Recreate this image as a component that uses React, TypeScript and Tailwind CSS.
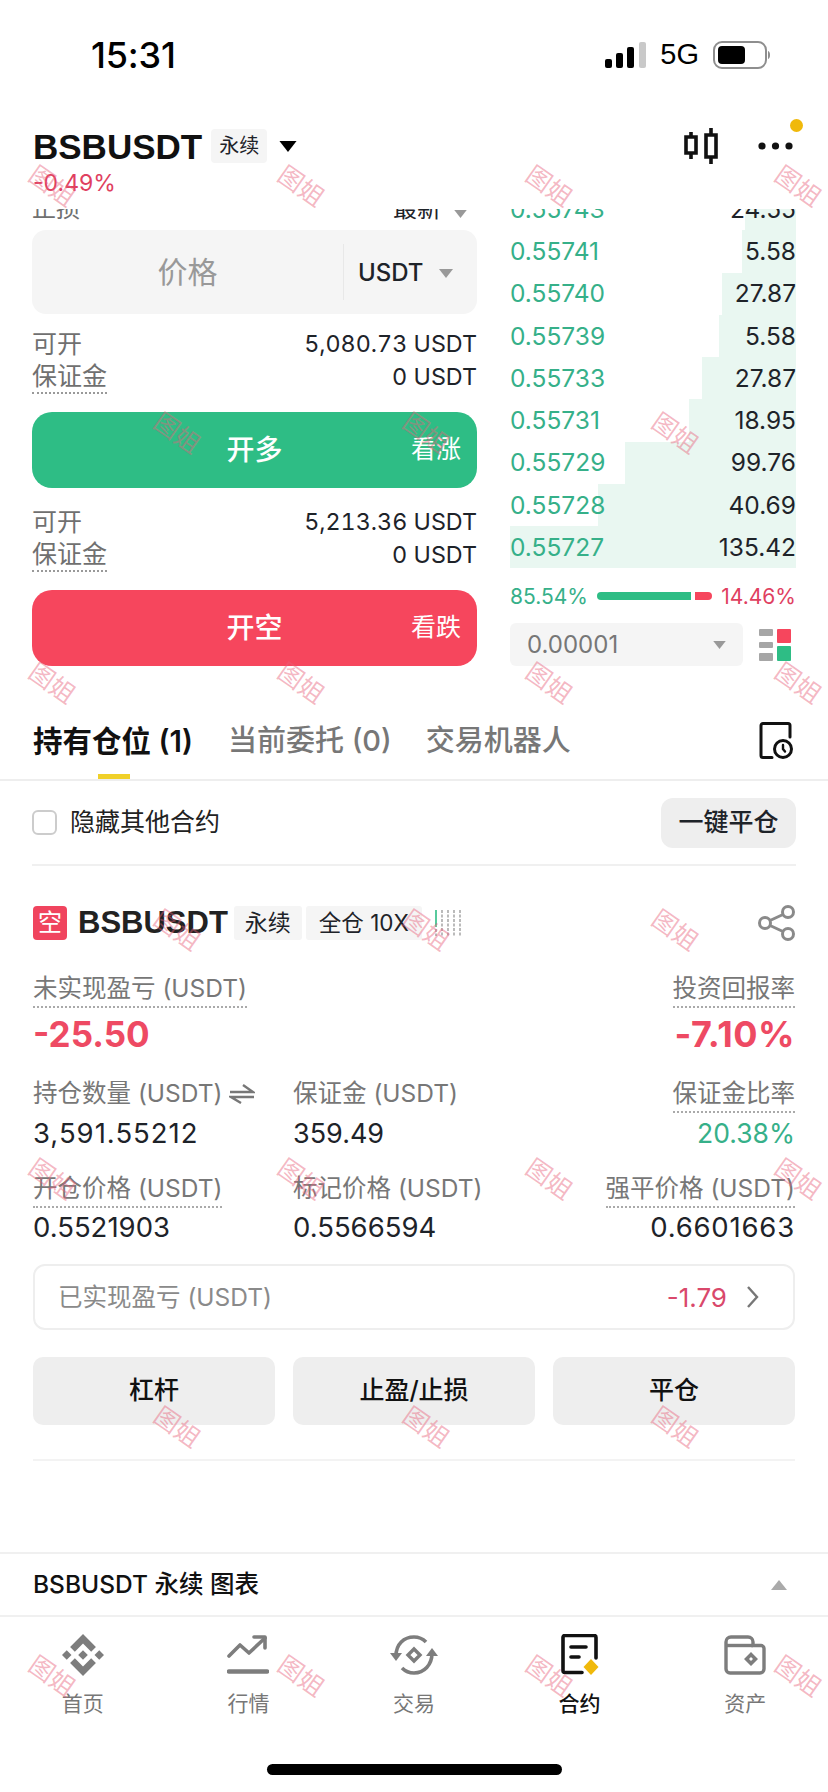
import React from "react";

const FONT = "font-['Inter','Noto_Sans_CJK_SC',sans-serif]";

const BOOK = [
  { price: "0.55743", qty: "24.55", left: 745 },
  { price: "0.55741", qty: "5.58", left: 742 },
  { price: "0.55740", qty: "27.87", left: 722 },
  { price: "0.55739", qty: "5.58", left: 719 },
  { price: "0.55733", qty: "27.87", left: 702 },
  { price: "0.55731", qty: "18.95", left: 689 },
  { price: "0.55729", qty: "99.76", left: 625 },
  { price: "0.55728", qty: "40.69", left: 598 },
  { price: "0.55727", qty: "135.42", left: 510 },
];

// watermark rows as they repeat across the page: [centre x, centre y]
const MARKS: [number, number][] = [
  [52, 186], [301, 186], [549, 186], [798, 186],
  [177, 433], [426, 433], [675, 433],
  [52, 683], [301, 683], [549, 683], [798, 683],
  [177, 930], [426, 930], [675, 930],
  [52, 1179], [301, 1179], [549, 1179], [798, 1179],
  [177, 1427], [426, 1427], [675, 1427],
  [52, 1676], [301, 1676], [549, 1676], [798, 1676],
];

function Caret({ className }: { className: string }) {
  return (
    <svg viewBox="0 0 14 9" className={className} fill="currentColor">
      <path d="M0 0h14L7 9z" />
    </svg>
  );
}

function OpenInfo({ amount, className }: { amount: string; className: string }) {
  return (
    <div className={className}>
      <div className="flex h-[33px] items-center justify-between text-[25px]">
        <span className="text-[#707070]">可开</span>
        <span className="text-[23.3px] text-[#1e2329] tabular-nums">{amount}</span>
      </div>
      <div className="flex h-[33px] items-center justify-between text-[25px]">
        <span className="h-[33px] border-b-2 border-dotted border-[#999] leading-[31px] text-[#707070]">保证金</span>
        <span className="text-[23.3px] text-[#1e2329]">0 USDT</span>
      </div>
    </div>
  );
}

function ActionButton({ label, hint, color }: { label: string; hint: string; color: string }) {
  return (
    <div className={`relative mt-[18px] flex h-[76px] items-center justify-center rounded-[20px] text-white ${color}`}>
      <span className="text-[28px] font-medium">{label}</span>
      <span className="absolute right-[16px] text-[25px]">{hint}</span>
    </div>
  );
}

function DottedLabel({ children }: { children: React.ReactNode }) {
  return (
    <span className="h-[35px] border-b-2 border-dotted border-[#aaa] text-[24.5px] leading-[30px] whitespace-nowrap text-[#777]">
      {children}
    </span>
  );
}

function PlainLabel({ children }: { children: React.ReactNode }) {
  return <span className="flex h-[35px] items-start text-[24.5px] leading-[30px] whitespace-nowrap text-[#777]">{children}</span>;
}

function Tag({ children, className }: { children: React.ReactNode; className: string }) {
  return <span className={`flex items-center justify-center bg-[#f5f5f5] text-[#1e2329] ${className}`}>{children}</span>;
}

function GrayButton({ children }: { children: React.ReactNode }) {
  return (
    <div className="flex h-[68px] w-[242px] items-center justify-center rounded-[10px] bg-[#eeeeee] text-[25px] font-medium text-[#111]">
      {children}
    </div>
  );
}

function HomeIcon() {
  return (
    <svg viewBox="0 0 126.61 126.61" className="h-[42px] w-[42px]" fill="#7d7d7d">
      <path d="m38.73 53.2 24.59-24.58 24.6 24.6 14.3-14.31L63.32 0 24.43 38.9zM0 63.31l14.3-14.31 14.31 14.31-14.31 14.3zM38.73 73.41l24.59 24.59 24.6-24.6 14.31 14.29-38.9 38.91-38.91-38.88-.02-.02zM98 63.31l14.3-14.31 14.31 14.3-14.31 14.32z" />
      <path d="M77.83 63.3 63.32 48.78 48.81 63.28l14.51 14.5z" />
    </svg>
  );
}

function MarketIcon() {
  return (
    <svg viewBox="0 0 42 42" className="h-[42px] w-[42px]" fill="none" stroke="#7d7d7d" strokeWidth="3.6" strokeLinecap="round" strokeLinejoin="round">
      <path d="M2 22l11-11 9 8L38 4" />
      <path d="M27 3h11v11" />
      <path d="M2 37.500h38" strokeWidth="4.6" />
    </svg>
  );
}

function TradeIcon() {
  return (
    <svg viewBox="0 0 50 42" className="h-[42px] w-[50px]" fill="none" stroke="#7d7d7d" strokeWidth="3.6">
      <path d="M7 22C7 10 15 3 25 3c5 0 9 2 12 5" />
      <path d="M43 19c0 12-8 20-18 20-5 0-9-2-12-5" />
      <path d="M1 19h12l-6 8zM37 22h12l-6-8z" fill="#7d7d7d" stroke="none" />
      <path d="M25 15l6 6-6 6-6-6z" strokeWidth="3.4" />
    </svg>
  );
}

function ContractIcon() {
  return (
    <svg viewBox="0 0 40 42" className="h-[42px] w-[40px]">
      <path d="M22 38.500H5a2 2 0 0 1-2-2v-33a2 2 0 0 1 2-2h29a2 2 0 0 1 2 2V24" fill="none" stroke="#111" strokeWidth="3.6" strokeLinecap="round" />
      <path d="M11 13h15M11 23h8" stroke="#111" strokeWidth="3.6" strokeLinecap="round" />
      <path d="M31 25l7.500 8-7.500 8-7.500-8z" fill="#f0b90b" />
    </svg>
  );
}

function AssetIcon() {
  return (
    <svg viewBox="0 0 42 42" className="h-[42px] w-[42px]" fill="none" stroke="#7d7d7d" strokeWidth="3.4">
      <path d="M2 8a5 5 0 0 1 5-5h17a5 5 0 0 1 5 5v3.500h8a3 3 0 0 1 3 3V35a4 4 0 0 1-4 4H6a4 4 0 0 1-4-4z" />
      <path d="M3 11.500h26" />
      <path fillRule="evenodd" d="M27 18l7 7-7 7-7-7zM27 23l-2 2 2 2 2-2z" fill="#7d7d7d" stroke="none" />
    </svg>
  );
}

function NavItem({ label, icon, active }: { label: string; icon: React.ReactNode; active?: boolean }) {
  return (
    <div className="flex flex-col items-center">
      <div className="flex h-[42px] items-center justify-center">{icon}</div>
      <span className={`mt-[12px] text-[21px] ${active ? "font-medium text-[#111]" : "text-[#777]"}`}>{label}</span>
    </div>
  );
}

export default function App() {
  return (
    <div className={`relative flex h-[1792px] w-[828px] flex-col overflow-hidden bg-white text-[#1e2329] ${FONT}`}>
      {/* status bar */}
      <div className="flex h-[110px] shrink-0 items-center justify-between pr-[58px] pl-[91px]">
        <span className="text-[36px] font-medium tracking-[-0.2px] text-black">15:31</span>
        <div className="flex items-center">
          <svg viewBox="0 0 41 26" className="h-[26px] w-[41px]">
            <rect x="0" y="17" width="7" height="9" rx="2" fill="#000" />
            <rect x="11" y="11" width="7" height="15" rx="2" fill="#000" />
            <rect x="22" y="5" width="7" height="21" rx="2" fill="#000" />
            <rect x="34" y="0" width="7" height="26" rx="2" fill="#c9c9c9" />
          </svg>
          <span className="ml-[14px] font-['Liberation_Sans',sans-serif] text-[29px] text-black">5G</span>
          <svg viewBox="0 0 57 28" className="ml-[14px] h-[28px] w-[57px]">
            <rect x="1" y="1" width="52" height="26" rx="8" fill="none" stroke="#8e8e8e" strokeWidth="2" />
            <rect x="5" y="5" width="27" height="18" rx="4" fill="#000" />
            <path d="M55 10c1.500.5 2 2 2 4s-.5 3.500-2 4z" fill="#8e8e8e" />
          </svg>
        </div>
      </div>

      {/* symbol header */}
      <div className="relative h-[99px] shrink-0 pl-[33px]">
        <div className="flex h-[72px] items-center">
          <span className="font-['Liberation_Sans',sans-serif] text-[35px] leading-none font-bold text-[#111]">BSBUSDT</span>
          <Tag className="ml-[9px] h-[34px] w-[56px] rounded-[4px] text-[20px]">永续</Tag>
          <Caret className="ml-[11px] h-[11px] w-[20px] text-black" />
        </div>
        <div className="absolute top-[60px] left-[33px] text-[23px] leading-[26px] text-[#e0405f]">-0.49%</div>
        <div className="absolute top-[18px] left-[684px] flex items-center">
          <svg viewBox="0 0 34 36" className="h-[36px] w-[34px]" fill="none" stroke="#111" strokeWidth="3.6">
            <path d="M2 9h10v16H2zM7 4v5M7 25v6M22 7h10v22H22zM27 0v7M27 29v7" />
          </svg>
          <svg viewBox="0 0 35 10" className="ml-[40px] h-[10px] w-[35px]" fill="#111">
            <circle cx="4" cy="5" r="3.6" />
            <circle cx="17.500" cy="5" r="3.6" />
            <circle cx="31" cy="5" r="3.6" />
          </svg>
        </div>
        <div className="absolute top-[9px] left-[790px] h-[13px] w-[13px] rounded-full bg-[#f0b90b]" />
      </div>

      {/* order form + book */}
      <div className="flex h-[491px] shrink-0 overflow-hidden pl-[32px]">
        <div className="w-[445px] shrink-0">
          <div className="mt-[-21px] flex h-[42px] items-center justify-between pr-[10px] text-[24px]">
            <span className="text-[#707070]">止损</span>
            <span className="flex items-center gap-[13px]">
              最新
              <Caret className="h-[8px] w-[13px] translate-y-[5px] text-[#999]" />
            </span>
          </div>
          <div className="flex h-[84px] items-center rounded-[14px] bg-[#f5f5f5]">
            <div className="flex-1 text-center text-[30px] text-[#999]">价格</div>
            <div className="flex h-[56px] w-[134px] items-center border-l border-[#e8e8e8] pt-[2px] pl-[14px]">
              <span className="text-[24px] font-medium">USDT</span>
              <Caret className="ml-[15px] h-[9px] w-[14px] text-[#999]" />
            </div>
          </div>
          <OpenInfo amount="5,080.73 USDT" className="mt-[14px]" />
          <ActionButton label="开多" hint="看涨" color="bg-[#2ebd85]" />
          <OpenInfo amount="5,213.36 USDT" className="mt-[18px]" />
          <ActionButton label="开空" hint="看跌" color="bg-[#f6465d]" />
        </div>

        <div className="ml-[33px] w-[286px] shrink-0">
          <div className="mt-[-21px]">
            {BOOK.map((row) => (
              <div key={row.price} className="relative flex h-[42.25px] items-center justify-between text-[24.5px]">
                <div className="absolute inset-y-0 right-0 bg-[#e9f7f1]" style={{ width: 796 - row.left }} />
                <span className="relative text-[#36b089]">{row.price}</span>
                <span className="relative text-[#1e2329]">{row.qty}</span>
              </div>
            ))}
          </div>
          <div className="mt-[16px] flex h-[24px] items-center justify-between text-[21px]">
            <span className="text-[#36b089]">85.54%</span>
            <div className="flex items-center gap-[4px]">
              <div className="h-[8px] w-[94px] rounded-l-full bg-[#2ebd85]" />
              <div className="h-[8px] w-[17px] rounded-r-full bg-[#f6465d]" />
            </div>
            <span className="text-[#e0405f]">14.46%</span>
          </div>
          <div className="mt-[15px] flex items-center">
            <div className="flex h-[43px] w-[233px] items-center justify-between rounded-[6px] bg-[#f5f5f5] pr-[17px] pl-[17px]">
              <span className="text-[24px] text-[#777]">0.00001</span>
              <Caret className="h-[8px] w-[13px] text-[#999]" />
            </div>
            <svg viewBox="0 0 32 32" className="ml-[16px] h-[32px] w-[32px]">
              <rect x="0" y="0" width="14" height="7" rx="1" fill="#a6a6a6" />
              <rect x="0" y="13" width="14" height="6" rx="1" fill="#a6a6a6" />
              <rect x="0" y="24" width="14" height="8" rx="1" fill="#a6a6a6" />
              <rect x="18" y="0" width="14" height="14" rx="1" fill="#f6465d" />
              <rect x="18" y="17" width="14" height="15" rx="1" fill="#2ebd85" />
            </svg>
          </div>
        </div>
      </div>

      {/* tabs */}
      <div className="relative flex h-[81px] shrink-0 items-center border-b-2 border-[#eeeeee] pt-[3px] pr-[34px] pl-[33px] text-[29px]">
        <span className="text-[29.5px] font-semibold text-[#111]">持有仓位 (1)</span>
        <span className="ml-[35px] font-medium text-[#777]">当前委托 (0)</span>
        <span className="ml-[34px] font-medium text-[#777]">交易机器人</span>
        <div className="absolute bottom-0 left-[98px] h-[5px] w-[32px] bg-[#f0d029]" />
        <svg viewBox="0 0 35 38" className="ml-auto h-[38px] w-[35px]" fill="none" stroke="#111" strokeWidth="3" strokeLinecap="round">
          <path d="M13 35.500H4a2 2 0 0 1-2-2V3.500a2 2 0 0 1 2-2h25a2 2 0 0 1 2 2V15" />
          <circle cx="24" cy="27" r="8.500" />
          <path d="M24 23v4l2 2.500" strokeWidth="2.4" />
        </svg>
      </div>

      <div className="mx-[32px] flex h-[85px] shrink-0 items-center border-b-2 border-[#f0f0f0]">
        <div className="h-[25px] w-[25px] rounded-[6px] border-2 border-[#cccccc]" />
        <span className="ml-[13px] text-[25px] text-[#222]">隐藏其他合约</span>
        <div className="ml-auto flex h-[50px] w-[135px] items-center justify-center rounded-[12px] bg-[#eeeeee] text-[25px] font-medium">
          一键平仓
        </div>
      </div>

      {/* position card */}
      <div className="px-[33px] pt-[40px]">
        <div className="flex h-[34px] items-center">
          <div className="flex h-[34px] w-[34px] items-center justify-center rounded-[4px] bg-[#f0445e] text-[24px] text-white">空</div>
          <span className="ml-[11px] font-['Liberation_Sans',sans-serif] text-[31px] font-bold text-[#222]">BSBUSDT</span>
          <Tag className="ml-[6px] h-[34px] w-[68px] rounded-[3px] text-[23px]">永续</Tag>
          <Tag className="ml-[4px] h-[34px] w-[116px] rounded-[3px] text-[22.5px]">全仓 10X</Tag>
          <svg viewBox="0 0 27 26" className="ml-[13px] h-[26px] w-[27px]" strokeWidth="1.6">
            <path d="M1 0v17" stroke="#2ebd85" />
            <path d="M1 19v7M7 0v26M13 0v26M19 0v26M25 0v26" stroke="#aaa" strokeDasharray="3 1.500" />
          </svg>
          <svg viewBox="0 0 37 36" className="ml-auto h-[36px] w-[37px]" fill="none" stroke="#8a8a8a" strokeWidth="3">
            <circle cx="7" cy="18" r="5.500" />
            <circle cx="30" cy="7" r="5.500" />
            <circle cx="30" cy="29" r="5.500" />
            <path d="M12 15.500l13-6M12 20.500l13 6" />
          </svg>
        </div>

        <div className="mt-[33px] grid grid-cols-[260px_1fr_auto]">
          <div className="flex flex-col items-start">
            <DottedLabel>未实现盈亏 (USDT)</DottedLabel>
            <span className="mt-[6px] flex h-[40px] items-center text-[35px] font-bold text-[#ee4a63]">-25.50</span>
          </div>
          <div />
          <div className="flex flex-col items-end">
            <DottedLabel>投资回报率</DottedLabel>
            <span className="mt-[6px] flex h-[40px] items-center text-[36px] font-bold tracking-[0.5px] text-[#ee4a63]">-7.10%</span>
          </div>
        </div>

        <div className="mt-[24px] grid grid-cols-[260px_1fr_auto]">
          <div className="flex flex-col items-start">
            <PlainLabel>
              持仓数量 (USDT)
              <svg viewBox="0 0 26 20" className="mt-[6px] ml-[7px] h-[20px] w-[26px]" fill="none" stroke="#777" strokeWidth="2.4">
                <path d="M1 8h23L14 1M25 13H2l10 6" />
              </svg>
            </PlainLabel>
            <span className="mt-[1px] flex h-[40px] items-center text-[27.5px] tracking-[1px]">3,591.55212</span>
          </div>
          <div className="flex flex-col items-start">
            <PlainLabel>保证金 (USDT)</PlainLabel>
            <span className="mt-[1px] flex h-[40px] items-center text-[27px]">359.49</span>
          </div>
          <div className="flex flex-col items-end">
            <DottedLabel>保证金比率</DottedLabel>
            <span className="mt-[1px] flex h-[40px] items-center text-[26.5px] text-[#36b089]">20.38%</span>
          </div>
        </div>

        <div className="mt-[19px] grid grid-cols-[260px_1fr_auto]">
          <div className="flex flex-col items-start">
            <DottedLabel>开仓价格 (USDT)</DottedLabel>
            <span className="flex h-[40px] items-center text-[27.5px]">0.5521903</span>
          </div>
          <div className="flex flex-col items-start">
            <PlainLabel>标记价格 (USDT)</PlainLabel>
            <span className="flex h-[40px] items-center text-[27.5px]">0.5566594</span>
          </div>
          <div className="flex flex-col items-end">
            <DottedLabel>强平价格 (USDT)</DottedLabel>
            <span className="flex h-[40px] items-center text-[27.5px] tracking-[0.8px]">0.6601663</span>
          </div>
        </div>

        <div className="mt-[16px] flex h-[66px] items-center rounded-[12px] border-2 border-[#eeeeee] pr-[34px] pl-[23px]">
          <span className="text-[24.5px] text-[#8a8a8a]">已实现盈亏 (USDT)</span>
          <span className="ml-auto text-[26px] text-[#d9486b]">-1.79</span>
          <svg viewBox="0 0 12 22" className="ml-[20px] h-[22px] w-[12px]" fill="none" stroke="#777" strokeWidth="2.4">
            <path d="M1 1l9 10-9 10" />
          </svg>
        </div>

        <div className="mt-[27px] flex justify-between">
          <GrayButton>杠杆</GrayButton>
          <GrayButton>止盈/止损</GrayButton>
          <GrayButton>平仓</GrayButton>
        </div>
        <div className="mt-[34px] h-[2px] bg-[#f3f3f3]" />
      </div>

      {/* chart drawer + nav */}
      <div className="mt-auto flex h-[65px] shrink-0 items-center justify-between border-y-2 border-[#f0f0f0] pr-[41px] pl-[33px]">
        <span className="text-[24.5px] font-medium text-[#111]">BSBUSDT 永续 图表</span>
        <svg viewBox="0 0 16 10" className="h-[10px] w-[16px]" fill="#aaa">
          <path d="M8 0l8 10H0z" />
        </svg>
      </div>
      <div className="grid h-[175px] shrink-0 grid-cols-5 pt-[17px]">
        <NavItem label="首页" icon={<HomeIcon />} />
        <NavItem label="行情" icon={<MarketIcon />} />
        <NavItem label="交易" icon={<TradeIcon />} />
        <NavItem label="合约" icon={<ContractIcon />} active />
        <NavItem label="资产" icon={<AssetIcon />} />
      </div>
      <div className="absolute top-[1764px] left-[267px] h-[11px] w-[295px] rounded-full bg-black" />

      {/* watermark layer */}
      {MARKS.map(([x, y]) => (
        <span
          key={`${x}-${y}`}
          className="pointer-events-none absolute w-[60px] rotate-[35deg] text-center text-[25px] leading-none text-[#e8617a]/45"
          style={{ left: x - 30, top: y - 12 }}
        >
          图姐
        </span>
      ))}
    </div>
  );
}
